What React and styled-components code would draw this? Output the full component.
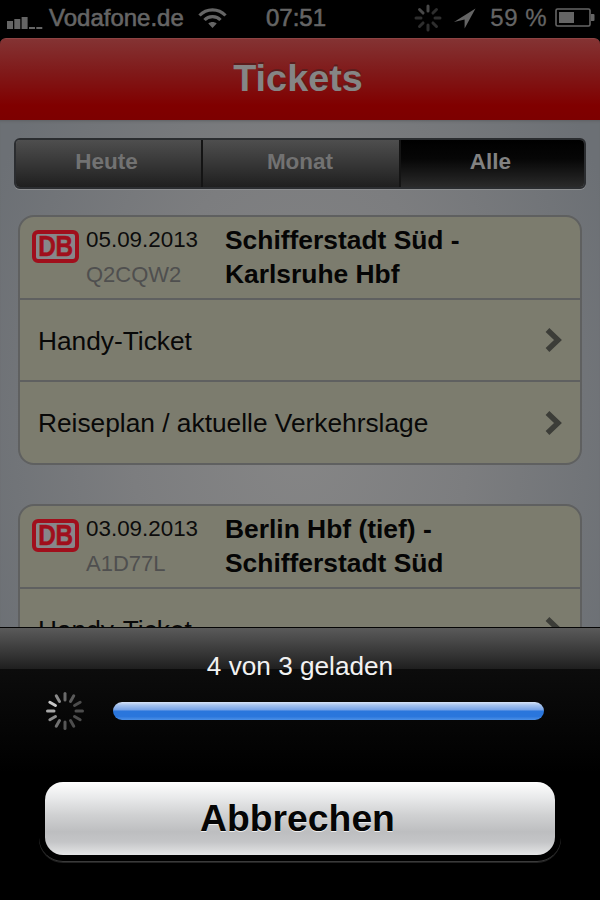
import React from "react";
import styled, { createGlobalStyle } from "styled-components";

const Global = createGlobalStyle`
  html, body { margin: 0; padding: 0; background: #000; }
  body { width: 600px; height: 900px; overflow: hidden; font-family: "Liberation Sans", Arial, sans-serif; }
  * { box-sizing: border-box; }
`;

const Screen = styled.div`
  position: relative;
  width: 600px;
  height: 900px;
  overflow: hidden;
  background: #000;
  display: flex;
  flex-direction: column;
`;

const StatusBar = styled.div`
  height: 38px;
  flex: none;
  background: #000;
  color: #656565;
  display: flex;
  align-items: center;
  padding: 0 5px 2px 7px;
  font-size: 24px;
  font-weight: 400;
  -webkit-text-stroke: 0.6px #656565;
`;

const StatusLeft = styled.div`
  display: flex;
  align-items: center;
  flex: 1;
  min-width: 0;
`;

const Carrier = styled.span`
  margin-left: 4px;
`;

const Wifi = styled.svg`
  margin-left: 14px;
  flex: none;
`;

const Time = styled.span`
  position: absolute;
  left: 266px;
  top: 4px;
  line-height: 27px;
`;

const StatusRight = styled.div`
  display: flex;
  align-items: center;
`;

const Percent = styled.span`
  margin-left: 14px;
  letter-spacing: 0.5px;
  -webkit-text-stroke: 0.3px #656565;
`;

const Nav = styled.header`
  height: 82px;
  flex: none;
  border-radius: 6px 6px 0 0;
  border-top: 1px solid #8d4444;
  background: linear-gradient(#843333 0%, #801a1a 40%, #800000 82%, #7d0000 100%);
  display: flex;
  align-items: center;
  justify-content: center;
  padding-right: 4px;
`;

const Title = styled.h1`
  margin: -3px 0 0;
  font-size: 37.8px;
  font-weight: 700;
  color: #858585;
  text-shadow: 0 -2px 0 #5c1d1d;
`;

const Content = styled.main`
  flex: 1;
  padding: 18px 14px 0;
  background:
    radial-gradient(ellipse 340px 520px at 300px 300px, #868686 0%, #7c7d7f 50%, #6c7075 100%);
  box-shadow: inset 0 3px 3px -2px #5d6063;
`;

const Segments = styled.div`
  display: flex;
  height: 51px;
  border-radius: 6px;
  border: 2px solid #2b2d30;
  overflow: hidden;
  box-shadow: 0 1px 0 #8c8e90;
`;

const Segment = styled.div`
  width: ${(p) => p.$w}px;
  flex: none;
  display: flex;
  align-items: center;
  justify-content: center;
  font-size: 22.5px;
  font-weight: 700;
  color: ${(p) => (p.$active ? "#828282" : "#727272")};
  background: ${(p) =>
    p.$active
      ? "linear-gradient(#000 0%, #060606 40%, #2a2a2a 100%)"
      : "linear-gradient(#4e4e4e 0%, #373737 50%, #1f1f1f 100%)"};
  border-left: ${(p) => (p.$first ? "none" : "2px solid #141414")};
  padding: 0 ${(p) => p.$shift}px 3px 0;
`;

const Card = styled.section`
  margin: ${(p) => p.$mt}px 4px 0;
  border: 2px solid #5f6060;
  border-radius: 16px;
  background: #7c7c6e;
`;

const CardHead = styled.div`
  height: 81px;
  display: flex;
  padding: 10px 0 0 12px;
`;

const DbLogo = styled.div`
  width: 47px;
  height: 33px;
  margin-top: 3px;
  flex: none;
  border: 4px solid #a00f1c;
  border-radius: 6px;
  background: #87878a;
  color: #a00f1c;
  font-size: 29px;
  font-weight: 700;
  line-height: 25px;
  text-align: center;
  overflow: hidden;
  -webkit-text-stroke: 0.5px #a00f1c;
`;

const DbLetters = styled.span`
  display: inline-block;
  transform: scaleX(0.84);
  transform-origin: center;
  letter-spacing: -0.5px;
  margin-left: -4px;
  margin-right: -4px;
`;

const Meta = styled.div`
  width: 139px;
  margin-left: 7px;
  flex: none;
`;

const DateText = styled.div`
  color: #0c0c0c;
  font-size: 22.4px;
  line-height: 26px;
`;

const Code = styled.div`
  color: #4f4f4f;
  font-size: 22px;
  line-height: 26px;
  margin-top: 9px;
`;

const Route = styled.div`
  font-size: 26.4px;
  font-weight: 700;
  color: #050505;
  line-height: 34px;
  margin-top: -4px;
`;

const Row = styled.div`
  height: ${(p) => p.$h}px;
  border-top: 2px solid #5f6060;
  display: flex;
  align-items: center;
  justify-content: space-between;
  padding: 0 18px 0 18px;
  font-size: 26.3px;
  color: #080808;
`;

const RowLabel = styled.span`
  margin-top: 2px;
`;

const Sheet = styled.div`
  position: absolute;
  left: 0;
  right: 0;
  top: 627px;
  bottom: 0;
  background: #000;
  border-top: 1px solid #050505;
`;

const SheetHead = styled.div`
  height: 41px;
  background: linear-gradient(#5a5a5a 0%, #3a3a3a 55%, #1f1f1f 100%);
`;

const SheetBody = styled.div`
  position: relative;
  height: 231px;
  background: linear-gradient(#0c0c0c 0%, #000 45%);
  display: flex;
  flex-direction: column;
`;

const Loaded = styled.div`
  position: absolute;
  top: -17px;
  left: 0;
  right: 0;
  line-height: 28px;
  text-align: center;
  color: #f2f2f2;
  font-size: 26.2px;
`;

const ProgressRow = styled.div`
  display: flex;
  align-items: center;
  padding: 20px 0 0 46px;
  height: 64px;
`;

const Track = styled.div`
  margin-left: 29px;
  width: 431px;
  height: 18px;
  border-radius: 9px;
  overflow: hidden;
`;

const Fill = styled.div`
  height: 100%;
  background: linear-gradient(#d7e3f7 0%, #a4c2ee 18%, #76a2e6 44%, #2a76dc 50%, #2a76dc 80%, #4d90e6 100%);
`;

const CancelWrap = styled.div`
  margin: 49px 39px 0;
  padding: 0 6px 6px;
  border-radius: 0 0 24px 24px;
  border-bottom: 1px solid #3a3a3a;
  box-shadow: 0 1px 0 #222;
`;

const Cancel = styled.div`
  height: 73px;
  border-radius: 18px;
  background: linear-gradient(#fefefe 0%, #e8e9ea 22%, #d0d1d2 45%, #bdbec0 68%, #c4c5c7 82%, #e4e5e6 100%);
  display: flex;
  align-items: center;
  justify-content: center;
  padding-right: 5px;
  font-size: 37.3px;
  font-weight: 700;
  color: #050505;
  text-shadow: 0 1px 0 #eee;
`;

function SignalBars() {
  return (
    <svg width="38" height="16" viewBox="0 0 38 16" fill="#656565" style={{ marginTop: 6, flex: "none" }}>
      <rect x="0" y="8" width="6" height="8" />
      <rect x="7.3" y="6" width="6" height="10" />
      <rect x="14.6" y="4" width="6" height="12" />
      <rect x="22" y="14" width="6" height="2" />
      <rect x="29.3" y="14" width="6" height="2" />
    </svg>
  );
}

function WifiIcon() {
  return (
    <Wifi width="29" height="22" viewBox="0 0 29 22" fill="none" stroke="#656565" strokeWidth="3.2">
      <path d="M1.5 8.5C8.5 1 20.5 1 27.5 8.5" />
      <path d="M6.5 13C10.5 8.5 18.5 8.5 22.5 13" />
      <path d="M14.5 21l-4.2-4.4c2.2-2 6.2-2 8.4 0z" fill="#656565" stroke="none" />
    </Wifi>
  );
}

function StatusSpinner() {
  const a = Array.from({ length: 8 }, (_, i) => i * 45);
  return (
    <svg width="28" height="28" viewBox="-14 -14 28 28" style={{ marginRight: 12 }}>
      {a.map((d) => (
        <line key={d} x1="0" y1="-7" x2="0" y2="-12" stroke={d === 315 || d === 0 ? "#484848" : "#2e2e2e"} strokeWidth="3" strokeLinecap="round" transform={`rotate(${d})`} />
      ))}
    </svg>
  );
}

function Arrow() {
  return (
    <svg width="22" height="21" viewBox="0 0 22 21">
      <path d="M21.5 0.5L0 14 10.6 11.5 10.6 20.5z" fill="#656565" />
    </svg>
  );
}

function Battery() {
  return (
    <svg width="40" height="20" viewBox="0 0 40 20" style={{ marginLeft: 8 }}>
      <rect x="1" y="1" width="34" height="17" rx="1.5" fill="none" stroke="#656565" strokeWidth="1.6" />
      <rect x="4" y="4" width="15" height="11" fill="#656565" />
      <path d="M36 6h2.5a1 1 0 0 1 1 1v5a1 1 0 0 1-1 1H36z" fill="#656565" />
    </svg>
  );
}

function Chevron() {
  return (
    <svg width="18" height="26" viewBox="0 0 18 26" fill="none">
      <path d="M3.5 3L14 13 3.5 23" stroke="#3c3d38" strokeWidth="5.4" />
    </svg>
  );
}

function LoadSpinner() {
  const shades = ["#6a6a6a", "#5a5a5a", "#4c4c4c", "#4c4c4c", "#4c4c4c", "#4c4c4c", "#555", "#6f6f6f", "#8c8c8c", "#a8a8a8", "#c8c8c8", "#8a8a8a"];
  return (
    <svg width="38" height="38" viewBox="-19 -19 38 38" style={{ flex: "none" }}>
      {shades.map((c, i) => (
        <line key={i} x1="0" y1="-11" x2="0" y2="-17.5" stroke={c} strokeWidth="3" strokeLinecap="round" transform={`rotate(${i * 30})`} />
      ))}
    </svg>
  );
}

function TicketCard({ mt, date, code, from, to }) {
  return (
    <Card $mt={mt}>
      <CardHead>
        <DbLogo><DbLetters>DB</DbLetters></DbLogo>
        <Meta>
          <DateText>{date}</DateText>
          <Code>{code}</Code>
        </Meta>
        <Route>
          <div>{from}</div>
          <div>{to}</div>
        </Route>
      </CardHead>
      <Row $h={82}><RowLabel>Handy-Ticket</RowLabel><Chevron /></Row>
      <Row $h={83}><RowLabel>Reiseplan / aktuelle Verkehrslage</RowLabel><Chevron /></Row>
    </Card>
  );
}

export default function App() {
  return (
    <Screen>
      <Global />
      <StatusBar>
        <StatusLeft>
          <SignalBars />
          <Carrier>Vodafone.de</Carrier>
          <WifiIcon />
        </StatusLeft>
        <Time>07:51</Time>
        <StatusRight>
          <StatusSpinner />
          <Arrow />
          <Percent>59 %</Percent>
          <Battery />
        </StatusRight>
      </StatusBar>
      <Nav><Title>Tickets</Title></Nav>
      <Content>
        <Segments>
          <Segment $first $shift={4} $w={185}>Heute</Segment>
          <Segment $shift={2} $w={198}>Monat</Segment>
          <Segment $active $shift={6} $w={187}>Alle</Segment>
        </Segments>
        <TicketCard mt={26} date="05.09.2013" code="Q2CQW2" from="Schifferstadt Süd -" to="Karlsruhe Hbf" />
        <TicketCard mt={39} date="03.09.2013" code="A1D77L" from="Berlin Hbf (tief) -" to="Schifferstadt Süd" />
      </Content>
      <Sheet>
        <SheetHead />
        <SheetBody>
          <Loaded>4 von 3 geladen</Loaded>
          <ProgressRow>
            <LoadSpinner />
            <Track><Fill /></Track>
          </ProgressRow>
          <CancelWrap>
            <Cancel>Abbrechen</Cancel>
          </CancelWrap>
        </SheetBody>
      </Sheet>
    </Screen>
  );
}
